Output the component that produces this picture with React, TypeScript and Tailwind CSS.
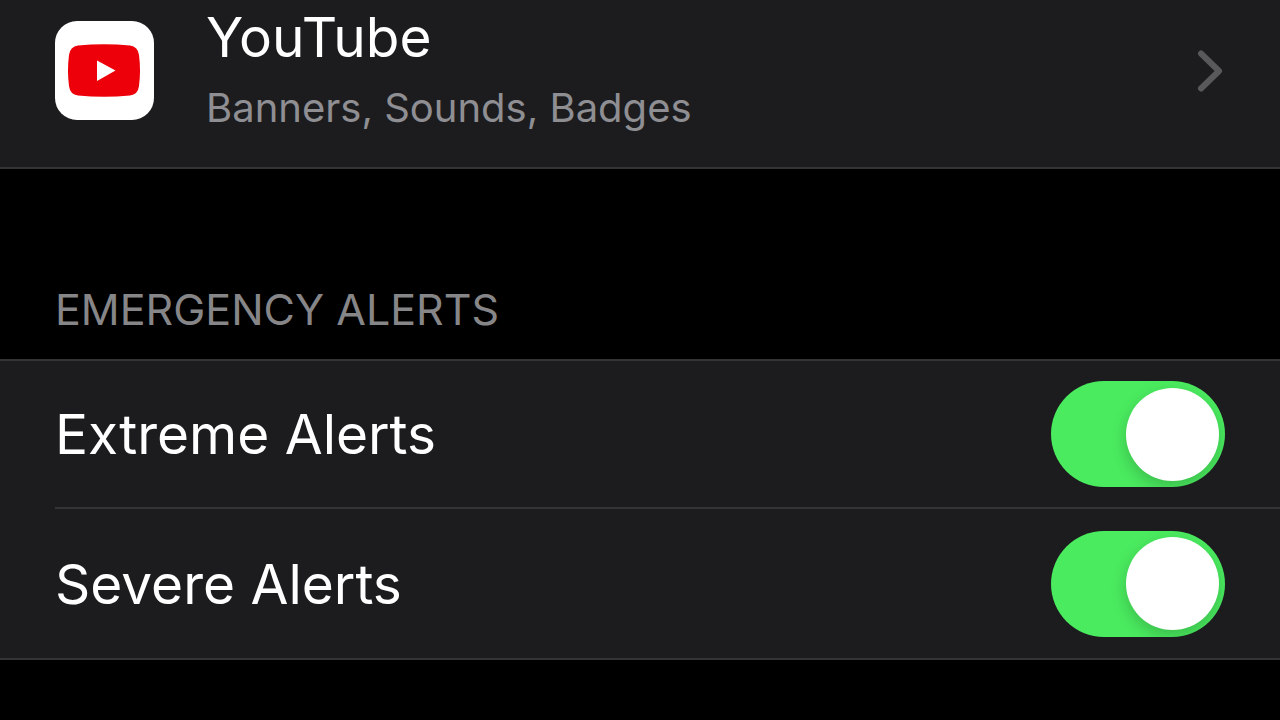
import { useState } from "react";

function AlertRow({ id, label, last }: { id: string; label: string; last?: boolean }) {
  const [on, setOn] = useState(true);
  return (
    <li className="pl-[55px]">
      <div
        className={
          "flex items-center justify-between pr-[55px] " +
          (last ? "h-[149px]" : "h-[148px] border-b-2 border-[#343436]")
        }
      >
        <label htmlFor={id} className="text-[55px] leading-[68px] text-white">
          {label}
        </label>
        <input
          id={id}
          type="checkbox"
          role="switch"
          checked={on}
          onChange={(e) => setOn(e.target.checked)}
          className="flex h-[106px] w-[174px] shrink-0 cursor-pointer appearance-none items-center overflow-hidden rounded-full bg-[#39393d] px-[6px] before:block before:size-[93px] before:rounded-full before:bg-white before:shadow-[0_6px_16px_rgba(0,0,0,0.2)] checked:justify-end checked:bg-[#4aeb5f]"
        />
      </div>
    </li>
  );
}

export default function App() {
  return (
    <main className="min-h-screen overflow-x-hidden bg-black font-['Inter',sans-serif]">
      <a href="#youtube" className="flex h-[169px] items-start border-b-2 border-[#343436] bg-[#1c1c1e] px-[55px]">
        <svg viewBox="0 0 100 100" className="mt-[21px] size-[100px] shrink-0" aria-hidden="true">
          <rect width="99" height="99" rx="22" fill="#fff" />
          <path
            d="M23 24.500Q49 22 75 24.500Q83 25.500 84 34Q86 49.500 84 65Q83 73.500 75 74.500Q49 77 23 74.500Q15 73.500 14 65Q12 49.500 14 34Q15 25.500 23 24.500Z"
            fill="#ed0009"
          />
          <path d="M42 39.500V60L60.500 49.500Z" fill="#fff" />
        </svg>
        <span className="ml-[51px] flex flex-1 flex-col">
          <span className="mt-[3px] text-[55px] leading-[68px] text-white">YouTube</span>
          <span className="mt-[9px] text-[40px] leading-[56px] text-[#8e8e93]">Banners, Sounds, Badges</span>
        </span>
        <svg viewBox="0 0 28 44" className="mt-[49px] h-[44px] w-[28px] shrink-0" fill="none" aria-hidden="true">
          <path d="M4 4.500L22 22L4 39.500" stroke="#59595c" strokeWidth="6" strokeLinecap="round" strokeLinejoin="round" />
        </svg>
      </a>
      <section aria-labelledby="emergency">
        <h2 id="emergency" className="pt-[112px] pb-[22px] pl-[55px] text-[43px] leading-[56px] text-[#868688]">
          EMERGENCY ALERTS
        </h2>
        <ul className="border-y-2 border-[#343436] bg-[#1c1c1e]">
          <AlertRow id="extreme" label="Extreme Alerts" />
          <AlertRow id="severe" label="Severe Alerts" last />
        </ul>
      </section>
    </main>
  );
}
